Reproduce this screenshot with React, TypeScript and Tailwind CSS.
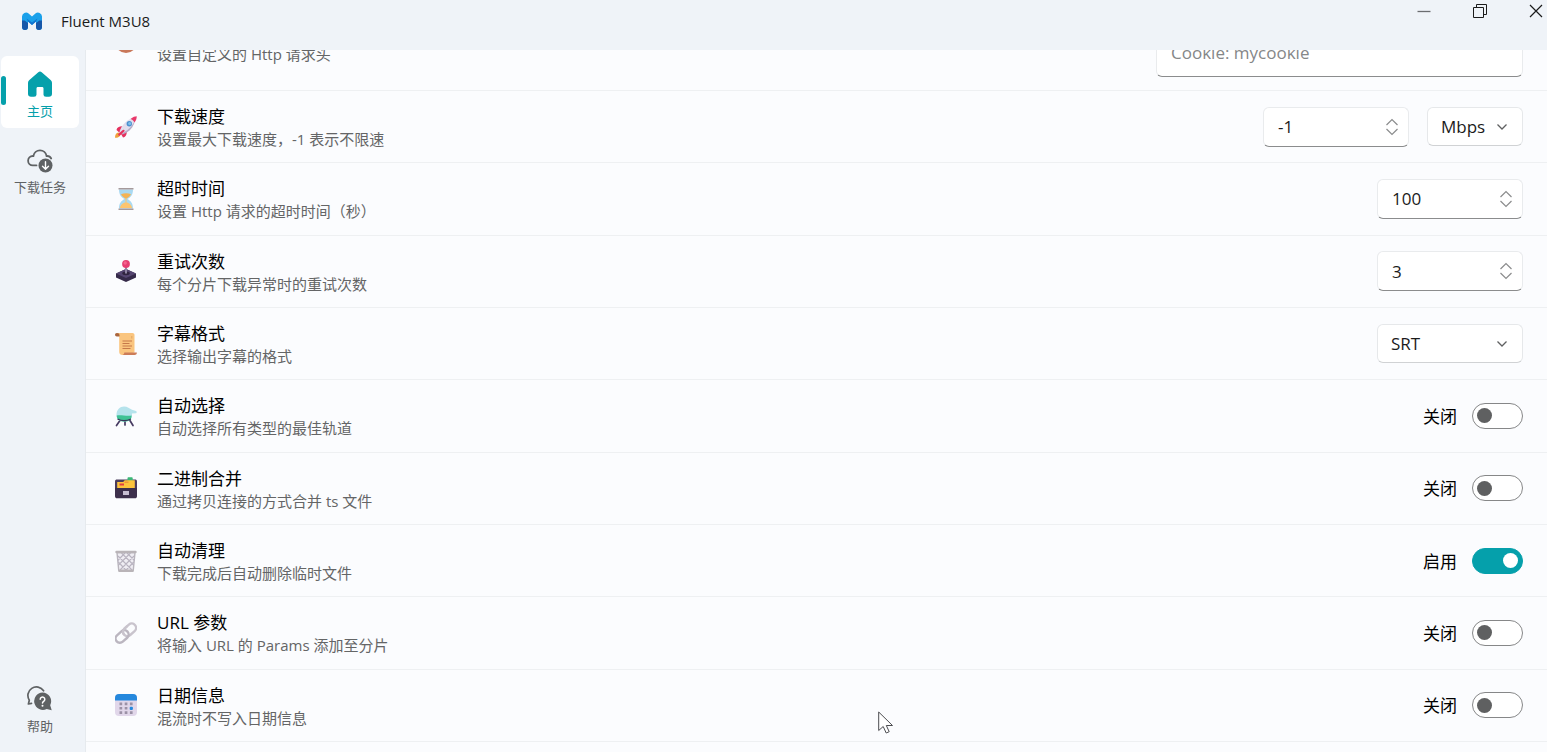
import React, { useState } from 'react';

const Logo = () => (
  <svg viewBox="0 0 20 18" className="h-[18px] w-5">
    <path d="M0 4.500a4 4 0 0 1 6.600-3L10 4.600l3.400-3.100a4 4 0 0 1 6.600 3V15a3 3 0 0 1-6 0V9.600L10 13 6 9.600V15a3 3 0 0 1-6 0z" fill="#1aa0ea" />
    <path d="M0 8.500h2.600L6 11v4a3 3 0 0 1-6 0zM20 8.500h-2.600L14 11v4a3 3 0 0 0 6 0z" fill="#1757a9" />
    <path d="M4.500 6.500 10 10.500l5.500-4L14 9.600 10 13 6 9.600z" fill="#1173cf" />
  </svg>
);

const HomeIcon = () => (
  <svg viewBox="0 0 24 26" className="h-[26px] w-6" fill="#05a0ab">
    <path d="M10.300 1.200a2.500 2.500 0 0 1 3.400 0l8.900 7.700A4 4 0 0 1 24 12v11a3 3 0 0 1-3 2.800h-3A2.500 2.500 0 0 1 15.500 23v-5.500c0-1-.5-1.500-1.500-1.500h-4c-1 0-1.500.5-1.500 1.500V23A2.500 2.500 0 0 1 6 25.800H3A3 3 0 0 1 0 23V12a4 4 0 0 1 1.400-3.100z" />
  </svg>
);

const DownloadIcon = () => (
  <svg viewBox="0 0 26 26" className="size-[26px]" fill="none">
    <path d="M9.500 18.400H5.800A4.600 4.600 0 0 1 5.800 9h.6a6.700 6.700 0 0 1 13.200 0h.6a4.500 4.500 0 0 1 4 2.500" stroke="#5f6264" strokeWidth="1.800" strokeLinecap="round" />
    <circle cx="18.500" cy="18.500" r="7" fill="#5f6264" />
    <path d="M18.500 14.700v7.200M15.500 19.200l3 3 3-3" stroke="#fff" strokeWidth="1.400" strokeLinecap="round" strokeLinejoin="round" />
  </svg>
);

const HelpIcon = () => (
  <svg viewBox="0 0 26 26" className="size-[26px]" fill="none">
    <path d="M4.500 17.400 1.400 18l.9-3.800A8.300 8.300 0 1 1 16.600 4.800" stroke="#5f6264" strokeWidth="1.700" strokeLinecap="round" strokeLinejoin="round" />
    <path d="M15.500 6.500a8.700 8.700 0 0 1 7.700 12.700l1.500 5-5-1.200A8.700 8.700 0 1 1 15.500 6.500z" fill="#5f6264" />
    <path d="M13.200 13.300a2.300 2.300 0 1 1 3.500 2c-.9.600-1.200 1-1.200 1.800" stroke="#fff" strokeWidth="1.500" strokeLinecap="round" />
    <circle cx="15.500" cy="19.700" r="1" fill="#fff" />
  </svg>
);

const CookieIcon = () => (
  <svg viewBox="0 0 22 22" className="size-[22px]">
    <circle cx="11" cy="11" r="11" fill="#c9785a" />
    <circle cx="7" cy="8" r="2" fill="#7a3f31" />
    <circle cx="14" cy="13" r="2" fill="#7a3f31" />
  </svg>
);

const RocketIcon = () => (
  <svg viewBox="0 0 22 22" className="size-[22px]">
    <path d="M0 21.800c0-3 1-5 3.500-5.300l2 2C5.200 21 3 21.800 0 21.800z" fill="#f0a03c" />
    <path d="M1.500 14c.5-3 3-4 7-3.700L7 15.500l-2.800 1zM8 21.500c3-.5 4-3 3.700-7L7 15.500 6 18z" fill="#e5315f" />
    <path d="M4.500 15.500C7 8.500 12 3 20 1.500 19.500 9 14 14.500 7 18z" fill="#e2deed" />
    <path d="M6.500 17.500C12 15 18 10 20.500 2.500L19 8c-2 5-6 8.500-11.500 10.500z" fill="#b7adc9" />
    <path d="M15.500 3C18 1 20 .3 21.700.3c.2 2-.7 4.300-2.200 6.200-1-1.900-2.200-2.900-4-3.500z" fill="#e8386b" />
    <path d="M8.500 14.800 4.200 18.600" stroke="#e5315f" strokeWidth="2.200" strokeLinecap="round" />
    <circle cx="14.300" cy="7.800" r="2.700" fill="#4a91cf" />
    <circle cx="14.600" cy="7.500" r="1.500" fill="#81bfe9" />
  </svg>
);

const HourglassIcon = () => (
  <svg viewBox="0 0 22 22" className="size-[22px]">
    <path d="M4 1.500h14c0 5-2 7.500-5.500 9.500 3.500 2 5.500 4.500 5.500 9.500H4c0-5 2-7.500 5.500-9.500C6 9 4 6.500 4 1.500z" fill="#a9d9f2" />
    <path d="M6 6.300c3-1.300 7-1.300 10 0-1 2-2.500 3.300-5 4.500-2.500-1.200-4-2.500-5-4.500z" fill="#f3b355" />
    <path d="M5 20c.2-3 3-5.500 6-5.500s5.800 2.500 6 5.500zM10.500 10h1v5h-1z" fill="#fcc570" />
    <path d="M3.500 0h15v1.500h-15zM3.500 20.500h15V22h-15z" fill="#a59a9b" />
  </svg>
);

const JoystickIcon = () => (
  <svg viewBox="0 0 22 22" className="size-[22px]">
    <path d="M1 13.500 11 9l10 4.500v4L11 22 1 17.500z" fill="#352a49" />
    <path d="M1 13.500 11 9l10 4.500L11 18z" fill="#554671" />
    <ellipse cx="11" cy="13.300" rx="3.800" ry="1.900" fill="#30243f" />
    <path d="M10 6h2v7.500h-2z" fill="#9086a3" />
    <circle cx="11" cy="4" r="3.900" fill="#e63f72" />
    <circle cx="10.200" cy="3" r="1.700" fill="#f4648e" />
  </svg>
);

const ScrollIcon = () => (
  <svg viewBox="0 0 22 22" className="size-[22px]">
    <path d="M2 0h15.500c1.500 0 2 1 2 2v17.500L9 22H7.500C5 22 4.200 20.800 4.200 18.500V3.500z" fill="#fac57f" />
    <path d="M1.800 0a1.800 1.800 0 0 0 0 3.600h2.600C4.900 1.800 4.200 0 1.800 0z" fill="#a9653e" />
    <path d="M9.300 19.600h12.500c.3 1.400-.8 2.400-2.300 2.400H7.500c1.300-.3 1.800-1.200 1.800-2.400z" fill="#cc7c58" />
    <path d="M7.500 8H17M7.500 10.500h7M7.500 13H17M7.500 15.500h8" stroke="#c5784a" strokeWidth="1.100" />
    <path d="M16.800 3v2.500" stroke="#e0a662" />
  </svg>
);

const FlaskIcon = () => (
  <svg viewBox="0 0 22 22" className="size-[22px]">
    <path d="m6 14-4.500 6.500M14 14l4 6.500M10 15v5" stroke="#473b62" strokeWidth="1.700" strokeLinecap="round" />
    <path d="M1.500 10C1.500 4.500 5 1.500 9 1.500c3.500 0 5.500 2 8 3.300l4 1.200c1 .5.900 2 0 2.300L17 8.500c.5 5-2.500 8-7.500 8s-8-2-8-6.500z" fill="#b5e3ec" />
    <path d="M1.700 10.500c4-1 10 1 14.900 0 .2 4-2.600 6-7.100 6s-7.600-2-7.800-6z" fill="#3fc295" />
    <path d="M2.500 14c4 2 9 2 13.500 0" stroke="#3b355a" strokeWidth="1.300" fill="none" />
  </svg>
);

const FileBoxIcon = () => (
  <svg viewBox="0 0 22 22" className="size-[22px]">
    <path d="M0 4.500C0 3 .8 2.500 2 2.500h18c1.200 0 2 .5 2 2V12H0z" fill="#4b3c5c" />
    <path d="M12.500 1.500c0-.8.400-1.200 1-1.200h3.200c.7 0 1 .4 1 1.200V4h-5.200z" fill="#3bb776" />
    <path d="M2.200 5h6l1.500-1.700h10.100V12H2.200z" fill="#fcc43d" />
    <path d="M4.500 6.500h4.500v2H4.500z" fill="#e33e43" />
    <path d="M9.500 4.500h4V6h-4z" fill="#ee9638" />
    <path d="M0 11h22v8c0 1.500-.8 2.300-2.200 2.300H2.200C.8 21.300 0 20.500 0 19z" fill="#3d304c" />
    <path d="M8 14h6v4H8z" fill="#c8bfd2" />
  </svg>
);

const TrashIcon = () => (
  <svg viewBox="0 0 22 22" className="size-[22px]" fill="none">
    <path d="M2 2.500h18L18.300 20c0 .8-.5 1.200-1.300 1.200H5c-.8 0-1.300-.4-1.300-1.200z" fill="#efedf3" stroke="#b9b5bd" strokeWidth="1.400" />
    <path d="m3 6 14 14M6.500 3l12 12M12 3l7.500 7.500M3.300 12l8 8.500M19 6 5 20M15.500 3l-12 12M10 3 2.700 10.500M18.700 12l-8 8.500" stroke="#b8b3c0" strokeWidth="1.100" />
    <path d="M1.500 2h19M4.500 20.700h13" stroke="#b9b4b8" strokeWidth="2.400" strokeLinecap="round" />
  </svg>
);

const LinkIcon = () => (
  <svg viewBox="0 0 22 22" className="size-[22px]" fill="none">
    <g transform="rotate(-42 11 11)" strokeWidth="2.400">
      <rect x="8.500" y="6.700" width="14.500" height="8.600" rx="4.300" stroke="#c9c4cd" />
      <rect x="-1.500" y="6.700" width="14.500" height="8.600" rx="4.300" stroke="#bbb6c0" />
      <path d="M8.500 11a4.300 4.300 0 0 1 4.300-4.300h4" stroke="#c9c4cd" />
    </g>
  </svg>
);

const CalendarIcon = () => (
  <svg viewBox="0 0 22 22" className="size-[22px]">
    <rect width="22" height="22" rx="4" fill="#e1d7ea" />
    <path d="M0 6.500V4a4 4 0 0 1 4-4h14a4 4 0 0 1 4 4v2.500z" fill="#2588dd" />
    <g fill="#9b91a6">
      <path d="M4.500 8.500h2.700v2.700H4.500zM9.700 8.500h2.700v2.700H9.700zM14.900 8.500h2.700v2.700h-2.700zM4.500 12.900h2.700v2.700H4.500zM9.700 12.900h2.700v2.700H9.700zM4.500 17.300h2.700V20H4.500zM9.700 17.300h2.700V20H9.700zM14.900 17.300h2.700V20h-2.700z" />
    </g>
    <rect x="14.700" y="12.700" width="3.200" height="3.200" rx="1" fill="#2588dd" />
  </svg>
);

type RowProps = {
  icon: React.ReactNode;
  title?: string;
  description: string;
  tall?: boolean;
  children: React.ReactNode;
};

const SettingRow = ({ icon, title, description, tall, children }: RowProps) => (
  <div
    className={`flex shrink-0 items-center border-b border-[#eef0f2] pl-[29px] pr-6 ${tall ? 'h-[98px]' : 'min-h-[72px] grow basis-0'}`}
  >
    <div className="mr-5 shrink-0">{icon}</div>
    <div className="min-w-0 grow pt-[3px]">
      <div className="h-[22px] text-[17px] leading-[22px] text-black">{title}</div>
      <div className="text-[15px] leading-[22px] text-[#646566]">{description}</div>
    </div>
    {children}
  </div>
);

type SpinProps = {
  label: string;
  initial: number;
};

const SpinBox = ({ label, initial }: SpinProps) => {
  const [value, setValue] = useState(initial);

  return (
    <div className="flex h-10 w-[146px] items-center rounded-md border border-[#e9ebed] border-b-[#8b8c8d] bg-white pl-[14px] pr-[9px]">
      <input
        type="number"
        aria-label={label}
        value={value}
        onChange={(e) => setValue(Number(e.target.value))}
        className="w-full min-w-0 grow bg-transparent text-[17px] text-[#1b1b1b] outline-none [appearance:textfield] [&::-webkit-inner-spin-button]:appearance-none"
      />
      <div className="flex shrink-0 flex-col gap-[2px]">
        <button aria-label={`${label} +`} onClick={() => setValue(value + 1)}>
          <svg viewBox="0 0 14 8" className="block h-2 w-[14px]" fill="none" stroke="#8b8c8d" strokeWidth="1.200">
            <path d="m1.500 7 5.500-5.500L12.500 7" />
          </svg>
        </button>
        <button aria-label={`${label} -`} onClick={() => setValue(value - 1)}>
          <svg viewBox="0 0 14 8" className="block h-2 w-[14px]" fill="none" stroke="#8b8c8d" strokeWidth="1.200">
            <path d="M1.500 1 7 6.500 12.500 1" />
          </svg>
        </button>
      </div>
    </div>
  );
};

type ComboProps = {
  label: string;
  option: string;
  wide?: boolean;
};

const ComboBox = ({ label, option, wide }: ComboProps) => (
  <div className={`grid items-center ${wide ? 'w-[146px]' : 'w-24'}`}>
    <select
      aria-label={label}
      className="col-start-1 row-start-1 h-[39px] w-full appearance-none rounded-md border border-[#e6e8ea] border-b-[#d0d2d4] bg-white pl-[13px] text-[17px] text-[#1b1b1b] outline-none"
    >
      <option>{option}</option>
    </select>
    <svg
      viewBox="0 0 12 8"
      className="pointer-events-none col-start-1 row-start-1 mr-[15px] h-2 w-3 justify-self-end"
      fill="none"
      stroke="#5f6061"
      strokeWidth="1.300"
    >
      <path d="M1.500 1.500 6 6l4.500-4.500" />
    </svg>
  </div>
);

const Switch = ({ initial = false }: { initial?: boolean }) => {
  const [checked, setChecked] = useState(initial);

  return (
    <label className="flex items-center gap-[15px] text-[17px] leading-[22px] text-black">
      <span className="pt-[2px]">{checked ? '启用' : '关闭'}</span>
      <input
        type="checkbox"
        role="switch"
        checked={checked}
        onChange={(e) => setChecked(e.target.checked)}
        className="flex h-[26px] w-[51px] appearance-none items-center rounded-full border border-[#868788] bg-white px-1 before:size-[15px] before:rounded-full before:bg-[#5f6061] checked:justify-end checked:border-[#05a0ab] checked:bg-[#05a0ab] checked:before:bg-white"
      />
    </label>
  );
};

type NavProps = {
  icon: React.ReactNode;
  text: string;
  active?: boolean;
};

const NavItem = ({ icon, text, active }: NavProps) => (
  <button
    className={`relative flex h-[72px] w-[78px] flex-col items-center rounded-md pt-[15px] text-[13px] leading-5 ${active ? 'bg-white text-[#05a0ab]' : 'text-[#5f6264]'}`}
  >
    {active && <span className="absolute left-0 top-5 h-[29px] w-[5px] rounded-full bg-[#05a0ab]" />}
    {icon}
    <span className="mt-1">{text}</span>
  </button>
);

const App = () => {
  return (
    <div className="flex h-screen flex-col overflow-hidden bg-[#eff3f8] font-['Open_Sans','Noto_Sans_CJK_SC',sans-serif]">
      <header className="flex h-[50px] shrink-0 items-start pl-[22px] pr-1">
        <div className="flex h-[42px] items-center gap-[19px]">
          <Logo />
          <h1 className="text-[15px] text-[#1b1b1b]">Fluent M3U8</h1>
        </div>
        <div className="ml-auto flex h-[22px] items-center gap-[42px]">
          <button aria-label="最小化">
            <svg viewBox="0 0 14 14" className="block size-[14px]">
              <path d="M.5 7.500h13" stroke="#6b6d70" strokeWidth="1.300" />
            </svg>
          </button>
          <button aria-label="还原">
            <svg viewBox="0 0 14 14" className="block size-[14px]" fill="none" stroke="#1b1b1b">
              <path d="M.5 3.500h10v10H.5zM3.500 3.500v-3h10v10h-3" />
            </svg>
          </button>
          <button aria-label="关闭">
            <svg viewBox="0 0 14 14" className="block size-[14px]" fill="none" stroke="#1b1b1b" strokeWidth="1.200">
              <path d="m1 1 12 12M13 1 1 13" />
            </svg>
          </button>
        </div>
      </header>

      <div className="flex min-h-0 grow">
        <nav className="flex w-[85px] shrink-0 flex-col gap-1 pb-[9px] pl-px pt-[6px]">
          <NavItem icon={<HomeIcon />} text="主页" active />
          <NavItem icon={<DownloadIcon />} text="下载任务" />
          <div className="mt-auto">
            <NavItem icon={<HelpIcon />} text="帮助" />
          </div>
        </nav>

        <main className="flex min-w-0 grow flex-col overflow-hidden border-l border-[#e6eaee] bg-[#fbfcfe]">
          {/* Row scrolled half out of view */}
          <div className="flex h-[41px] shrink-0 flex-col justify-end overflow-hidden">
            <SettingRow icon={<CookieIcon />} description="设置自定义的 Http 请求头" tall>
              <textarea
                aria-label="Http 请求头"
                placeholder="Cookie: mycookie"
                className="h-[70px] w-[367px] resize-none overflow-hidden rounded-md border border-[#e9ebed] border-b-[#8b8c8d] bg-white px-[14px] pt-[34px] text-[17px] leading-[22px] outline-none placeholder:text-[#858788]"
              />
            </SettingRow>
          </div>

          <SettingRow icon={<RocketIcon />} title="下载速度" description="设置最大下载速度，-1 表示不限速">
            <div className="flex items-center gap-[18px]">
              <SpinBox label="下载速度" initial={-1} />
              <ComboBox label="速度单位" option="Mbps" />
            </div>
          </SettingRow>
          <SettingRow icon={<HourglassIcon />} title="超时时间" description="设置 Http 请求的超时时间（秒）">
            <SpinBox label="超时时间" initial={100} />
          </SettingRow>
          <SettingRow icon={<JoystickIcon />} title="重试次数" description="每个分片下载异常时的重试次数">
            <SpinBox label="重试次数" initial={3} />
          </SettingRow>
          <SettingRow icon={<ScrollIcon />} title="字幕格式" description="选择输出字幕的格式">
            <ComboBox label="字幕格式" option="SRT" wide />
          </SettingRow>
          <SettingRow icon={<FlaskIcon />} title="自动选择" description="自动选择所有类型的最佳轨道">
            <Switch />
          </SettingRow>
          <SettingRow icon={<FileBoxIcon />} title="二进制合并" description="通过拷贝连接的方式合并 ts 文件">
            <Switch />
          </SettingRow>
          <SettingRow icon={<TrashIcon />} title="自动清理" description="下载完成后自动删除临时文件">
            <Switch initial />
          </SettingRow>
          <SettingRow icon={<LinkIcon />} title="URL 参数" description="将输入 URL 的 Params 添加至分片">
            <Switch />
          </SettingRow>
          <SettingRow icon={<CalendarIcon />} title="日期信息" description="混流时不写入日期信息">
            <Switch />
          </SettingRow>
          <div className="h-[10px] shrink-0" />
        </main>
      </div>

      {/* Mouse pointer */}
      <svg viewBox="0 0 16 24" className="pointer-events-none absolute left-[878px] top-[711px] h-6 w-4">
        <path d="M.7 1v18.500l4.500-4 3 6.500 3-1.300-2.900-6.200h6.200z" fill="#fff" stroke="#4b4c50" strokeLinejoin="round" />
      </svg>
    </div>
  );
};

export default App;
